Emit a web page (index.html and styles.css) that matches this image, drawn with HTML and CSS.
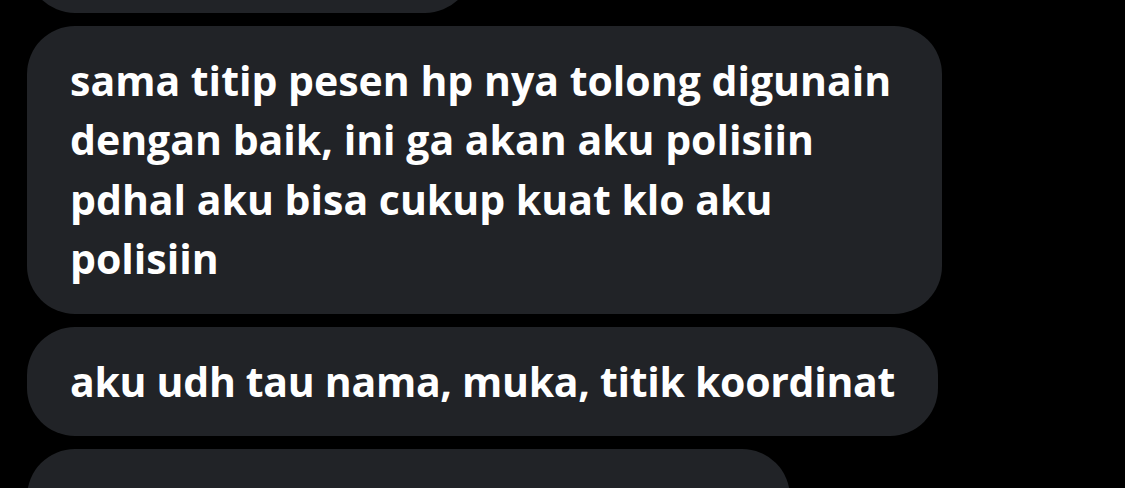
FILE: index.html
```html
<!DOCTYPE html>
<html lang="id">
<head>
<meta charset="utf-8">
<title>Chat</title>
<link rel="stylesheet" href="styles.css">
</head>
<body>
<div class="thread">
  <div class="bubble">iya aku paham ya</div>
  <div class="bubble">sama titip pesen hp nya tolong digunain dengan baik, ini ga akan aku polisiin pdhal aku bisa cukup kuat klo aku polisiin</div>
  <div class="bubble bubble-tight">aku udh tau nama, muka, titik koordinat</div>
  <div class="bubble">dia bisa aja bikin hilang jejak nya</div>
</div>
</body>
</html>
```
FILE: styles.css
```css
html, body {
  margin: 0;
  padding: 0;
  background: #000;
  height: 100%;
  overflow: hidden;
}
.thread {
  display: flex;
  flex-direction: column;
  align-items: flex-start;
  gap: 13px;
  padding-left: 27px;
  margin-top: -97px;
}
.bubble {
  box-sizing: border-box;
  max-width: 915px;
  background: #212327;
  color: #fff;
  font-family: "Open Sans", "Liberation Sans", sans-serif;
  font-weight: 700;
  font-size: 41px;
  line-height: 59.5px;
  padding: 25px 43px;
  border-radius: 48px;
}
.bubble-tight {
  letter-spacing: -0.3px;
}
```
